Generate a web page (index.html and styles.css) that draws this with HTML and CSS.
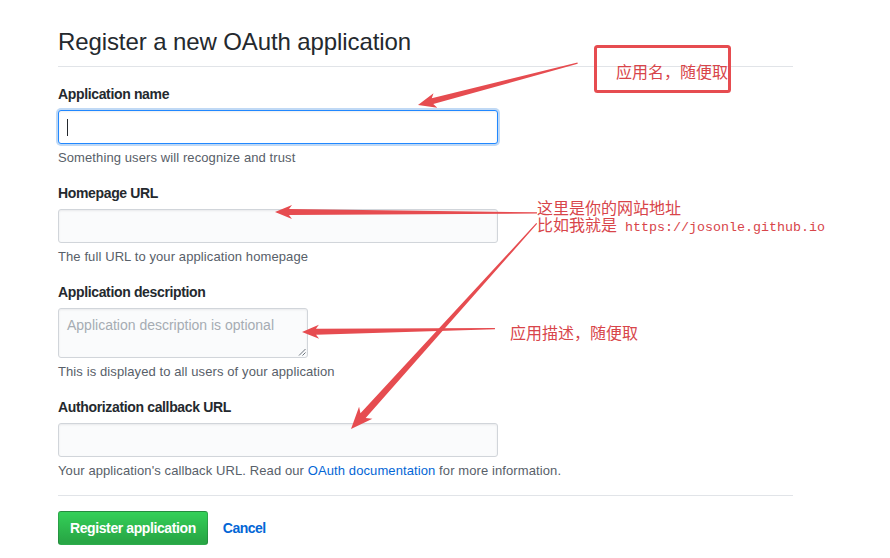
FILE: index.html
```html
<!DOCTYPE html>
<html lang="en">
<head>
<meta charset="utf-8">
<title>Register a new OAuth application</title>
<link rel="stylesheet" href="styles.css">
</head>
<body>
<main class="page">
  <h1 class="title">Register a new OAuth application</h1>
  <form class="form">
    <div class="group">
      <label class="label">Application name</label>
      <div class="field field-focus"><span class="caret"></span></div>
      <p class="note">Something users will recognize and trust</p>
    </div>
    <div class="group">
      <label class="label">Homepage URL</label>
      <div class="field"></div>
      <p class="note">The full URL to your application homepage</p>
    </div>
    <div class="group">
      <label class="label">Application description</label>
      <div class="field field-area">
        <span class="placeholder">Application description is optional</span>
        <svg class="grip" width="8" height="8" viewBox="0 0 8 8"><path d="M1 7.5L7.5 1M4.5 7.5L7.5 4.5" stroke="#6a737d" stroke-width="1" fill="none"/></svg>
      </div>
      <p class="note">This is displayed to all users of your application</p>
    </div>
    <div class="group">
      <label class="label">Authorization callback URL</label>
      <div class="field"></div>
      <p class="note">Your application's callback URL. Read our <a class="link">OAuth documentation</a> for more information.</p>
    </div>
    <div class="actions">
      <button type="button" class="btn">Register application</button>
      <a class="cancel">Cancel</a>
    </div>
  </form>
</main>

<svg class="annotations" width="890" height="558" viewBox="0 0 890 558">
  <rect x="595.5" y="46.5" width="134" height="45" rx="2" fill="none" stroke="#e64c50" stroke-width="3"/>
  <g fill="#e64c50">
    <polygon transform="translate(418 105) rotate(-14.7)" points="0,0 18,-7.5 15,-3 165,-0.6 165,0.6 15,3 18,7.5"/>
    <polygon transform="translate(275 212) rotate(0.2)" points="0,0 17,-7 14,-3 262,-0.6 262,0.6 14,3 17,7"/>
    <polygon transform="translate(302 332) rotate(-1)" points="0,0 17,-7 14,-3 193,-0.6 193,0.6 14,3 17,7"/>
    <polygon transform="translate(351 429) rotate(-47.9)" points="0,0 22,-9 18,-3.5 277,-0.6 277,0.6 18,3.5 22,9"/>
  </g>
</svg>
<div class="cn cn-name">应用名，随便取</div>
<div class="cn cn-url">这里是你的网站地址<br>比如我就是<span class="mono"> https://josonle.github.io</span></div>
<div class="cn cn-desc">应用描述，随便取</div>
</body>
</html>
```

FILE: styles.css
```css
html, body {
  margin: 0;
  padding: 0;
  background: #ffffff;
}

body {
  font-family: "Liberation Sans", Arial, sans-serif;
  color: #24292e;
  position: relative;
  width: 890px;
  height: 558px;
  overflow: hidden;
}

.page {
  width: 735px;
  padding: 27px 0 0 58px;
}

.title {
  margin: 0;
  font-size: 24px;
  font-weight: normal;
  letter-spacing: -0.1px;
  line-height: 30px;
  padding-bottom: 9px;
  border-bottom: 1px solid #e1e4e8;
  color: #24292e;
}

.form {
  display: flex;
  flex-direction: column;
  gap: 16px;
  padding-top: 17px;
  margin: 0;
}

.group {
  display: flex;
  flex-direction: column;
  align-items: flex-start;
}

.label {
  font-size: 14px;
  font-weight: bold;
  letter-spacing: -0.35px;
  line-height: 20px;
  margin-bottom: 6px;
  color: #24292e;
}

.field {
  box-sizing: border-box;
  width: 440px;
  height: 34px;
  border: 1px solid #d1d5da;
  border-radius: 3px;
  background: #fafbfc;
  box-shadow: inset 0 1px 2px rgba(27, 31, 35, 0.075);
  padding: 0 8px;
  display: flex;
  align-items: center;
}

.field-focus {
  background: #ffffff;
  border-color: #2188ff;
  box-shadow: inset 0 1px 2px rgba(27, 31, 35, 0.075), 0 0 0 2px rgba(3, 102, 214, 0.25);
}

.caret {
  width: 1px;
  height: 17px;
  background: #24292e;
}

.field-area {
  width: 250px;
  height: 50px;
  align-items: flex-start;
  padding-top: 6px;
  position: relative;
}

.placeholder {
  font-size: 14px;
  line-height: 20px;
  color: #a6acb3;
}

.grip {
  position: absolute;
  right: 1px;
  bottom: 1px;
}

.note {
  margin: 5px 0 0;
  font-size: 13px;
  letter-spacing: 0.1px;
  line-height: 18px;
  color: #586069;
}

.link {
  color: #0366d6;
  text-decoration: none;
}

.actions {
  display: flex;
  align-items: center;
  gap: 15px;
  border-top: 1px solid #e1e4e8;
  padding-top: 15px;
  margin-top: -1px;
}

.btn {
  box-sizing: border-box;
  height: 34px;
  padding: 0 11px;
  border: 1px solid rgba(27, 31, 35, 0.2);
  border-radius: 3px;
  background: linear-gradient(180deg, #34d058 0%, #28a745 90%);
  color: #ffffff;
  font-family: "Liberation Sans", Arial, sans-serif;
  font-size: 14px;
  font-weight: bold;
  letter-spacing: -0.4px;
  line-height: 20px;
}

.cancel {
  color: #0366d6;
  font-size: 14px;
  font-weight: bold;
  letter-spacing: -0.5px;
  text-decoration: none;
}

.annotations {
  position: absolute;
  left: 0;
  top: 0;
  pointer-events: none;
}

.cn {
  position: absolute;
  font-family: "Noto Sans CJK SC", sans-serif;
  font-size: 16px;
  line-height: 16px;
  color: #d8454a;
  white-space: nowrap;
}

.cn-name {
  left: 616px;
  top: 63px;
}

.cn-url {
  left: 537px;
  top: 199px;
  line-height: 17px;
}

.cn-desc {
  left: 510px;
  top: 324px;
}

.mono {
  font-family: "Liberation Mono", "Courier New", monospace;
  font-size: 13.33px;
}
```
